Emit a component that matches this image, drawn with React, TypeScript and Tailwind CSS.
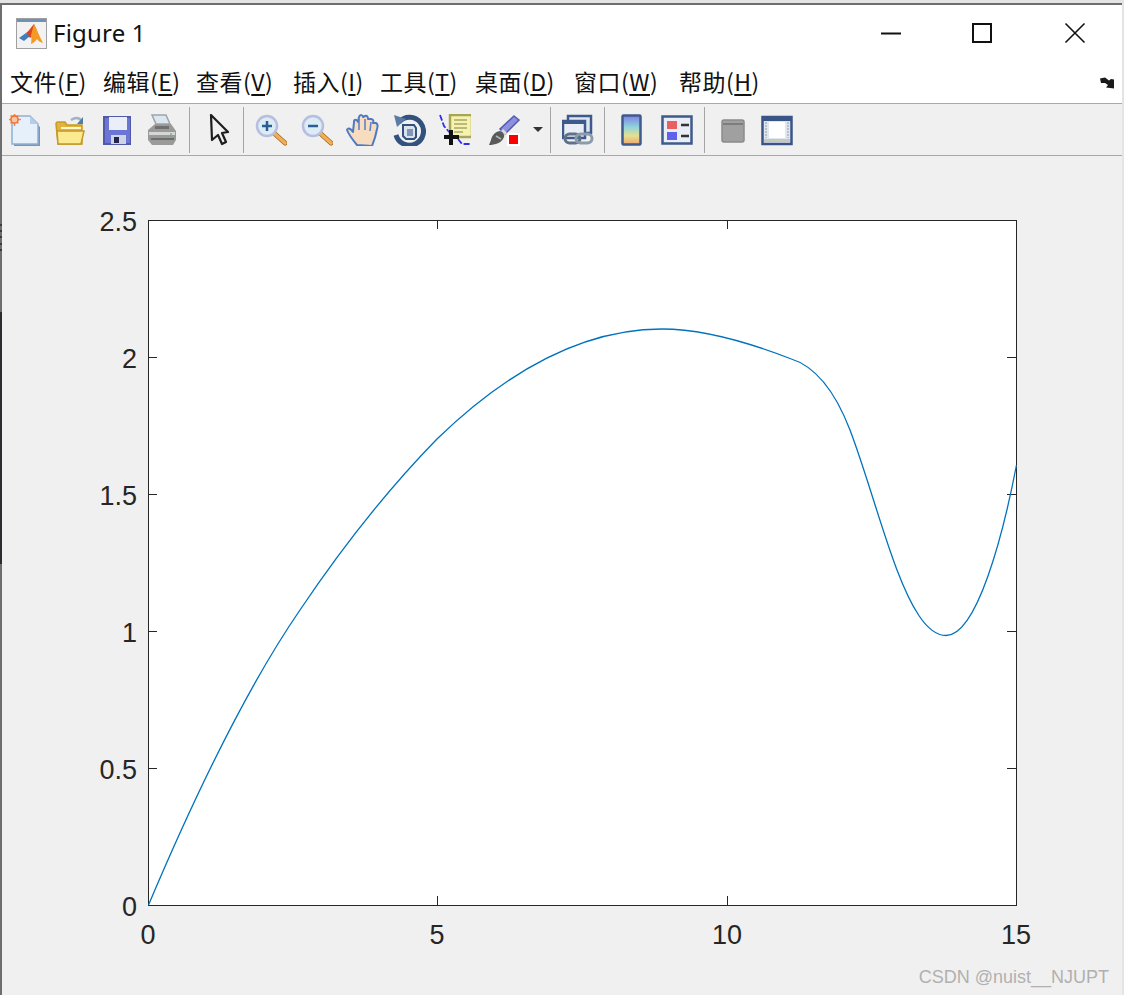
import type { ReactNode } from 'react';

const cjk = { fontFamily: '"Noto Sans CJK SC", "Noto Sans", sans-serif' };

const menus = [
  { label: '文件', key: 'F', w: 'w-[93px]' },
  { label: '编辑', key: 'E', w: 'w-[93px]' },
  { label: '查看', key: 'V', w: 'w-[97px]' },
  { label: '插入', key: 'I', w: 'w-[87px]' },
  { label: '工具', key: 'T', w: 'w-[95px]' },
  { label: '桌面', key: 'D', w: 'w-[99px]' },
  { label: '窗口', key: 'W', w: 'w-[105px]' },
  { label: '帮助', key: 'H', w: 'w-[90px]' },
];

function Ico({ children, w = 32 }: { children: ReactNode; w?: number }) {
  return (
    <svg width={w} height={32} viewBox={`0 0 ${w} 32`} className="block blur-[0.5px]">
      {children}
    </svg>
  );
}

function Btn({ children, className = 'w-[46px]' }: { children: ReactNode; className?: string }) {
  return <div className={`${className} flex items-center justify-center shrink-0`}>{children}</div>;
}

function Sep({ className = '' }: { className?: string }) {
  return <div className={`w-px h-[46px] bg-[#a5a5a5] shrink-0 ${className}`} />;
}

function NewFile() {
  return (
    <Ico>
      <path d="M5 4h17l9 9v19H5z" fill="#7f93ad" />
      <path d="M3 2h18l8 8v20H3z" fill="#e6f0fb" stroke="#8fb0d6" strokeWidth="1.5" />
      <path d="M21 2l8 8h-8z" fill="#b7cce6" />
      <path d="M5.500 0v12M0 5.500h12M1.500 1.500l8 8M9.500 1.500l-8 8" stroke="#ee8a55" strokeWidth="1.6" />
      <circle cx="5.500" cy="5.500" r="3.600" fill="#f7c7a4" stroke="#e8703a" strokeWidth="1.5" />
    </Ico>
  );
}

function OpenFolder() {
  return (
    <Ico>
      <path d="M16 6q6-4 10 0" fill="none" stroke="#9fb2c6" strokeWidth="2.5" />
      <path d="M28 3v7h-6z" fill="#4f7da8" />
      <path d="M1 10q0-2 2-2h7l2 3h15v19H3z" fill="#e3b23a" stroke="#c79a2a" strokeWidth="1.5" />
      <path d="M2 17h27l-3 13H3z" fill="#fcea90" stroke="#c4982a" strokeWidth="1.5" />
      <path d="M6 14h20" stroke="#fff7c4" strokeWidth="2" />
    </Ico>
  );
}

function Save() {
  return (
    <Ico>
      <path d="M2 2h28v29H2z" fill="#4f5aa8" />
      <path d="M4 4h25v25H4z" fill="#6c74d6" />
      <path d="M8 3h18v13H8z" fill="#e9eef8" />
      <path d="M10 21h15v9H10z" fill="#cfd3e6" />
      <path d="M13 23h5v6h-5z" fill="#23264a" />
    </Ico>
  );
}

function Printer() {
  return (
    <Ico>
      <path d="M5 1h14l4 9H9z" fill="#dbe6ee" stroke="#9aa5ae" strokeWidth="1.5" />
      <path d="M1 16l7-6h16l5 7v9l-3 5H5l-4-5z" fill="#9a9a9a" />
      <path d="M2 18h26v3H2z" fill="#d6d6d6" />
      <path d="M4 24h23v2H4z" fill="#6d6d6d" />
      <path d="M8 12h14v3H8z" fill="#6f6f6f" />
      <circle cx="24" cy="20" r="1" fill="#6fbf6f" />
    </Ico>
  );
}

function Cursor() {
  return (
    <Ico w={22}>
      <path
        d="M2 1l17 17-6 1 4 9-4 2-4-9-6 5z"
        fill="#f0f0f0"
        stroke="#1d1d1d"
        strokeWidth="2.2"
        strokeLinejoin="round"
      />
    </Ico>
  );
}

function Magnifier({ plus }: { plus?: boolean }) {
  return (
    <Ico>
      <path d="M20 20l10 9" stroke="#a06a20" strokeWidth="5" strokeLinecap="round" />
      <path d="M20 20l10 9" stroke="#f3ad54" strokeWidth="3.5" strokeLinecap="round" />
      <circle cx="12" cy="12" r="10" fill="#dcebf4" stroke="#b6bfe0" strokeWidth="2.5" />
      <path d="M7 12h10" stroke="#2a5f95" strokeWidth="2.5" />
      {plus && <path d="M12 7v10" stroke="#2a5f95" strokeWidth="2.5" />}
    </Ico>
  );
}

function Hand() {
  return (
    <Ico w={34}>
      <path
        d="M11 31C6 25 3 21 1 16c1-3 4-1 6 2l1-10c0-3 3-3 4 0l1-5c1-3 4-2 4 0l2-1c2-1 3 1 3 3l3 0c2 0 3 2 2 4l3 0c2 1 2 3 1 6-1 6-3 12-5 17z"
        fill="#f7dcc0"
        stroke="#4f79c4"
        strokeWidth="2"
        strokeLinejoin="round"
      />
      <path d="M13 5l0 11M19 5l0 11M25 8l-1 9" stroke="#5f83c8" strokeWidth="1.6" fill="none" />
    </Ico>
  );
}

function Rotate() {
  return (
    <Ico w={34}>
      <path d="M7 8a14 14 0 1 1-3 13" fill="none" stroke="#33517f" strokeWidth="5" />
      <path d="M2 1l12 4-9 8z" fill="#5a7ba5" />
      <path d="M11 11h11l2 3v9l-2 2H14l-3-3z" fill="#dce3ec" stroke="#33517f" strokeWidth="2" />
      <path d="M15 15h6v7h-6z" fill="#7f97b8" />
    </Ico>
  );
}

function DataCursor() {
  return (
    <Ico>
      <path d="M1 1l4 11 6 7M19 25l4 5h9" fill="none" stroke="#2f2fe8" strokeWidth="1.8" strokeDasharray="6 2" />
      <path d="M11 1h22v22H11z" fill="#f6f2b0" stroke="#a6a655" strokeWidth="2.5" />
      <path d="M15 6h13M15 10h13M15 14h13M15 18h9" stroke="#a8a868" strokeWidth="1.6" />
      <path d="M12 16v15M5 23h15" stroke="#111" strokeWidth="4" />
    </Ico>
  );
}

function Brush() {
  return (
    <Ico w={34}>
      <path d="M26 2l5 4-14 14-5-5z" fill="#8f8fe0" stroke="#4f5bb0" strokeWidth="1.500" />
      <path d="M14 16l4 4" stroke="#d9d9d9" strokeWidth="3" />
      <path d="M12 17c-6 1-8 5-9 9l-2 5c6 0 13-2 15-8 1-2-1-5-4-6z" fill="#5a5a5a" />
      <path d="M8 22l5 3" stroke="#b5b5b5" strokeWidth="1.500" />
      <path d="M19 19h13v13H19z" fill="#fff" />
      <path d="M21 21h9v9h-9z" fill="#f00" />
    </Ico>
  );
}

function Link() {
  return (
    <Ico>
      <path d="M6 2h23v17H6z" fill="#dfe6f0" stroke="#3d5a8c" strokeWidth="2.500" />
      <path d="M1 7h22v17H1z" fill="#e9eef6" stroke="#3d5a8c" strokeWidth="2.500" />
      <path d="M1 7h22v3H1z" fill="#3d5a8c" />
      <rect x="3" y="20" width="15" height="9" rx="4.500" fill="none" stroke="#5f7287" strokeWidth="3" />
      <rect x="14" y="20" width="16" height="9" rx="4.500" fill="none" stroke="#8c9cab" strokeWidth="3" />
    </Ico>
  );
}

function Colorbar() {
  return (
    <Ico w={22}>
      <defs>
        <linearGradient id="cb" x1="0" y1="0" x2="0" y2="1">
          <stop offset="0" stopColor="#7f7fe6" />
          <stop offset="0.4" stopColor="#8fd4dc" />
          <stop offset="0.7" stopColor="#e6e08f" />
          <stop offset="1" stopColor="#f0a66f" />
        </linearGradient>
      </defs>
      <rect x="1.500" y="1.500" width="18" height="29" rx="1" fill="url(#cb)" stroke="#3f5a8c" strokeWidth="2.500" />
    </Ico>
  );
}

function Legend() {
  return (
    <Ico>
      <path d="M1.500 2.500h29v27h-29z" fill="#e9eef6" stroke="#3f5a8c" strokeWidth="2.500" />
      <path d="M6 7h10v8H6z" fill="#ea6060" />
      <path d="M6 18h10v8H6z" fill="#6060ea" />
      <path d="M20 11h8M20 22h8" stroke="#333" strokeWidth="2.500" />
    </Ico>
  );
}

function GraySquare() {
  return (
    <Ico w={26}>
      <rect x="2" y="6" width="22" height="22" rx="2" fill="#a0a0a0" stroke="#8a8a8a" strokeWidth="1.500" />
      <path d="M3 10h20" stroke="#7d7d7d" strokeWidth="2" />
    </Ico>
  );
}

function PlotTools() {
  return (
    <Ico>
      <path d="M1.500 3h29v27h-29z" fill="#dfe6f0" stroke="#3a5488" strokeWidth="2.500" />
      <path d="M1.500 3h29v4h-29z" fill="#3a5488" />
      <path d="M8 8h16v16H8z" fill="#fff" />
      <path d="M3 25h26v3H3z" fill="#c8c8b8" />
      <path d="M5 8v16M27 8v16" stroke="#b8c0cc" strokeWidth="2" strokeDasharray="2 1" />
    </Ico>
  );
}

function MatlabLogo() {
  return (
    <svg width={31} height={31} viewBox="0 0 31 31" className="block">
      <rect x="0.500" y="0.500" width="30" height="30" fill="#f2f2f2" stroke="#a0a0a0" />
      <rect x="1" y="1" width="29" height="3" fill="#6c94b8" />
      <path d="M3 20l7-5 4 3-6 5z" fill="#3f7fc0" />
      <path d="M10 15c3-2 5-6 8-9l3 7-7 7z" fill="#d9461e" />
      <path d="M18 6c3 5 5 12 9 19-3-1-5-2-6-4-2 3-4 4-6 5 1-5 0-8 0-9z" fill="#f39a26" />
    </svg>
  );
}

// fitted by hand to the plotted line, page pixels
const curve =
  'M148.5 905 C195 795 245 690 300 610 C345 543 395 482 437 439 C500 378 575 329 662 329 C705 329 750 343 790 358.500 C815 366 835 391 850 430 C866 472 881 528 897 570 C910 604 926 635.500 946 635.500 C977 635.500 1003 535 1016.500 465';

const xTicks = [
  { x: 148.5, l: '0' },
  { x: 437.5, l: '5' },
  { x: 727.5, l: '10' },
  { x: 1016.5, l: '15' },
];
const yTicks = [
  { y: 905.5, l: '0' },
  { y: 768.5, l: '0.5' },
  { y: 631.5, l: '1' },
  { y: 494.5, l: '1.5' },
  { y: 357.5, l: '2' },
  { y: 220.5, l: '2.5' },
];

export default function App() {
  return (
    <div className="relative w-[1124px] h-[995px] overflow-hidden flex flex-col bg-[#e4e4e4] pt-[3px] pr-[2px]">
      <div className="flex-1 flex flex-col min-h-0 border-t-2 border-l-2 border-[#6e6e6e] bg-white">
        {/* Title bar */}
        <div className="h-[54px] flex items-center shrink-0 pl-[14px] pt-[2px]">
          <MatlabLogo />
          <span
            className="ml-[6px] text-[24px] text-[#111] tracking-[0.2px]"
            style={{ fontFamily: '"Noto Sans", sans-serif' }}
          >
            Figure 1
          </span>
          <svg width="240" height="32" viewBox="0 0 240 32" className="ml-auto mr-[2px] shrink-0 text-[#111]">
            <path d="M1 16.500h20" stroke="currentColor" strokeWidth="2" />
            <rect x="93" y="7" width="18" height="18" fill="none" stroke="currentColor" strokeWidth="2" />
            <path d="M185.500 6.500l19 19M204.500 6.500l-19 19" stroke="currentColor" strokeWidth="1.600" />
          </svg>
        </div>

        {/* Menu */}
        <div className="h-[44px] flex items-center shrink-0 pl-[8px] text-[23px] text-[#111]" style={cjk}>
          {menus.map((m) => (
            <span key={m.key} className={`${m.w} shrink-0 whitespace-nowrap tracking-[0.5px]`}>
              {m.label}(<span className="underline underline-offset-[3px] decoration-[1.5px]">{m.key}</span>)
            </span>
          ))}
          <svg width="16" height="12" viewBox="0 0 16 12" className="ml-auto mr-[7px] mt-[4px] shrink-0 blur-[0.3px]">
            <path d="M1 1.500l5-1 4 3 2-1.500 3 .5v9l-8-1 2-2.500-3-2-4 0z" fill="#1a1a1a" />
          </svg>
        </div>

        {/* Toolbar */}
        <div className="h-[53px] shrink-0 flex items-center border-y border-[#a8a8a8] bg-[#f0f0f0]">
          <Btn><NewFile /></Btn>
          <Btn><OpenFolder /></Btn>
          <Btn><Save /></Btn>
          <Btn><Printer /></Btn>
          <Sep className="ml-[3px]" />
          <Btn className="w-[53px] pl-[7px]"><Cursor /></Btn>
          <Sep className="mr-[4px]" />
          <Btn><Magnifier plus /></Btn>
          <Btn><Magnifier /></Btn>
          <Btn><Hand /></Btn>
          <Btn><Rotate /></Btn>
          <Btn><DataCursor /></Btn>
          <Btn className="w-[54px]"><Brush /></Btn>
          <svg width="12" height="6" viewBox="0 0 12 6" className="shrink-0 blur-[0.4px]">
            <path d="M1 0h10l-5 5z" fill="#333" />
          </svg>
          <Sep className="ml-[6px]" />
          <Btn className="w-[53px]"><Link /></Btn>
          <Sep />
          <Btn className="w-[54px]"><Colorbar /></Btn>
          <Btn className="w-[36px]"><Legend /></Btn>
          <Sep className="ml-[9px]" />
          <Btn className="w-[56px]"><GraySquare /></Btn>
          <Btn className="w-[32px]"><PlotTools /></Btn>
        </div>

        {/* Figure canvas */}
        <div className="flex-1 min-h-0 bg-[#f0f0f0] relative">
          <svg
            width="1120"
            height="839"
            viewBox="2 156 1120 839"
            className="block"
            style={{ fontFamily: '"Liberation Sans", Arial, sans-serif' }}
          >
            <rect x="148.5" y="220.5" width="868" height="685" fill="#fff" stroke="#262626" />
            {xTicks.slice(1, 3).map((t) => (
              <path key={t.l} d={`M${t.x} 220v9M${t.x} 905v-9`} stroke="#262626" />
            ))}
            {yTicks.slice(1, 5).map((t) => (
              <path key={t.l} d={`M148 ${t.y}h9M1016 ${t.y}h-9`} stroke="#262626" />
            ))}
            <path d={curve} fill="none" stroke="#0072bd" strokeWidth="1.3" />
            {xTicks.map((t) => (
              <text key={t.l} x={t.x - 0.5} y={944} textAnchor="middle" fontSize="27" fill="#262626">
                {t.l}
              </text>
            ))}
            {yTicks.map((t) => (
              <text key={t.l} x={137} y={t.y + 10.5} textAnchor="end" fontSize="27" fill="#262626">
                {t.l}
              </text>
            ))}
          </svg>
          {/* watermark */}
          <span
            className="absolute right-[13px] bottom-[7px] text-[18px] leading-[22px] text-[#b0b0b0]"
            style={{ fontFamily: '"Liberation Sans", Arial, sans-serif' }}
          >
            CSDN @nuist__NJUPT
          </span>
        </div>
      </div>
      {/* desktop behind the window shows through at the left edge */}
      <div className="absolute left-0 top-[312px] w-[2px] h-[252px] bg-[#2b2b30]" />
      <div className="absolute left-0 top-[224px] w-[2px] h-[2px] bg-[#3a3a3a]" />
      <div className="absolute left-0 top-[230px] w-[2px] h-[2px] bg-[#3a3a3a]" />
      <div className="absolute left-0 top-[236px] w-[2px] h-[2px] bg-[#3a3a3a]" />
      <div className="absolute left-0 top-[243px] w-[2px] h-[2px] bg-[#3a3a3a]" />
      <div className="absolute left-0 top-[249px] w-[2px] h-[2px] bg-[#3a3a3a]" />
    </div>
  );
}
